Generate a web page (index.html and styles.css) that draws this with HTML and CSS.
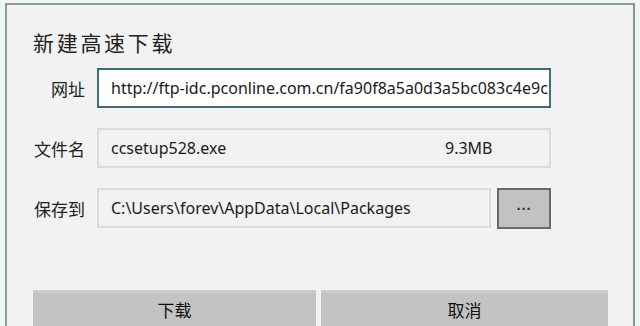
FILE: index.html
```html
<!DOCTYPE html>
<html lang="zh-CN">

<head>
    <meta charset="UTF-8">
    <meta name="viewport" content="width=device-width, initial-scale=1.0">
    <title>新建高速下载</title>
    <link rel="stylesheet" href="styles.css">
</head>

<body>
    <section class="dialog">
        <h2 class="title">新建高速下载</h2>

        <div class="form">
            <label class="label" for="url">网址</label>
            <div class="field url">http://ftp-idc.pconline.com.cn/fa90f8a5a0d3a5bc083c4e9c</div>

            <span class="label">文件名</span>
            <div class="field plain">
                <span class="name">ccsetup528.exe</span>
                <span class="size">9.3MB</span>
            </div>

            <span class="label">保存到</span>
            <div class="path-row">
                <div class="field plain">C:\Users\forev\AppData\Local\Packages</div>
                <button class="browse" type="button">···</button>
            </div>
        </div>

        <div class="actions">
            <button class="bt" type="button">下载</button>
            <button class="bt wide" type="button">取消</button>
        </div>
    </section>
</body>
</html>
```

FILE: styles.css
```css
body {
    margin: 0;
    padding: 3px 0 0 5px;
    background: #eef6f5;
    font-family: "Noto Sans", "Noto Sans CJK SC", sans-serif;
    color: #1a1a1a;
    height: 326px;
    box-sizing: border-box;
    overflow: hidden;
}
.dialog {
    width: 630px;
    height: 330px;
    box-sizing: border-box;
    background: #f2f2f2;
    border-top: 2px solid #8a9c95;
    border-left: 2px solid #8a9c95;
    border-right: 2px solid #8b9596;
    padding: 0 0 0 26px;
}
.title {
    margin: 0;
    padding-top: 22px;
    font-family: "Noto Sans CJK SC", sans-serif;
    font-weight: normal;
    font-size: 21px;
    letter-spacing: 2.7px;
    line-height: 30px;
    color: #222;
}
.form {
    display: grid;
    grid-template-columns: 52px 454px;
    column-gap: 12px;
    row-gap: 20px;
    margin-top: 11px;
    align-items: center;
}
.label {
    justify-self: end;
    font-family: "Noto Sans CJK SC", sans-serif;
    font-size: 17px;
    color: #222;
}
.field {
    height: 40px;
    box-sizing: border-box;
    display: flex;
    align-items: center;
    padding: 0 12px;
    font-size: 16px;
    white-space: nowrap;
    overflow: hidden;
}
.url {
    background: #fff;
    border: 2px solid #3d6c74;
}
.plain {
    background: #f2f2f2;
    border: 2px solid #dcdcdc;
    padding-left: 12px;
}
.name {
    width: 334px;
}
.path-row {
    display: flex;
    gap: 6px;
}
.path-row .plain {
    flex: 1;
}
.browse {
    width: 54px;
    height: 41px;
    background: #c2c2c2;
    border: 2px solid #6a6a6a;
    font-size: 15px;
    font-weight: bold;
    color: #333;
    padding: 0;
}
.actions {
    display: flex;
    gap: 5px;
    margin-top: 61px;
}
.bt {
    width: 283px;
    height: 40px;
    background: #c3c3c3;
    border: none;
    border-top: 3px solid #cdcdcd;
    font-family: "Noto Sans CJK SC", sans-serif;
    font-size: 17px;
    color: #111;
    padding: 0 0 4px;
}
.wide {
    width: 287px;
}
```
